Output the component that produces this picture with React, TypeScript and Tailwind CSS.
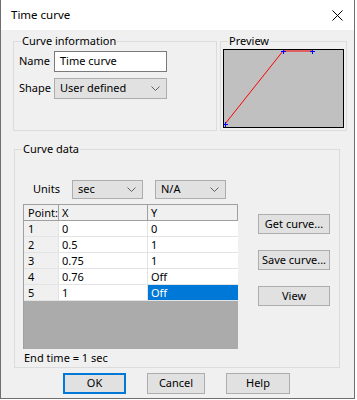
import React from 'react';

const font = { fontFamily: '"Noto Sans", "Open Sans", sans-serif' };

function Chevron() {
  return (
    <svg width="9" height="5" viewBox="0 0 9 5" className="shrink-0">
      <polyline points="0.5,0.5 4.5,4.5 8.5,0.5" fill="none" stroke="#606060" strokeWidth="1" />
    </svg>
  );
}

function Group({ label, className, children }: { label: string; className: string; children?: React.ReactNode }) {
  return (
    <div className={`relative border border-[#dcdcdc] ${className}`}>
      <span className="absolute -top-[9px] left-[7px] bg-[#f0f0f0] px-[1px] leading-[16px]">{label}</span>
      {children}
    </div>
  );
}

function Select({ value, className }: { value: string; className: string }) {
  return (
    <div className={`flex items-center justify-between bg-[#e1e1e1] border border-[#adadad] pl-[5px] pr-[6px] ${className}`}>
      <span>{value}</span>
      <Chevron />
    </div>
  );
}

function Button({ label, className }: { label: string; className: string }) {
  return (
    <div className={`flex items-center justify-center bg-[#e1e1e1] border border-[#adadad] ${className}`}>
      {label}
    </div>
  );
}

const rows = [
  ['1', '0', '0'],
  ['2', '0.5', '1'],
  ['3', '0.75', '1'],
  ['4', '0.76', 'Off'],
  ['5', '1', 'Off'],
];

export default function App() {
  return (
    <div className="w-[357px] h-[400px] bg-white text-[11px] text-black" style={font}>
      <div className="w-[355px] h-[399px] border-x border-b border-[#6f6f6f] flex flex-col">
        {/* Title bar */}
        <div className="h-[30px] bg-white flex items-center justify-between pl-[10px] pr-[11px] shrink-0">
          <span className="text-[11.5px]">Time curve</span>
          <svg width="11" height="11" viewBox="0 0 11 11">
            <line x1="0.5" y1="0.5" x2="10.5" y2="10.5" stroke="#000" strokeWidth="1" />
            <line x1="10.5" y1="0.5" x2="0.5" y2="10.5" stroke="#000" strokeWidth="1" />
          </svg>
        </div>

        {/* Body */}
        <div className="flex-1 bg-[#f0f0f0] flex flex-col">
          <div className="flex mt-[11px] ml-[12px]">
            <Group label="Curve information" className="w-[204px] h-[90px]">
              <div className="flex flex-col gap-[6px] pt-[9px] pl-[5px]">
                <div className="flex items-center h-[21px]">
                  <span className="w-[35px]">Name</span>
                  <div className="w-[113px] h-[21px] bg-white border border-[#7a7a7a] flex items-center pl-[5px]">Time curve</div>
                </div>
                <div className="flex items-center h-[21px]">
                  <span className="w-[35px]">Shape</span>
                  <Select value="User defined" className="w-[113px] h-[21px]" />
                </div>
              </div>
            </Group>
            <Group label="Preview" className="ml-[3px] w-[127px] h-[90px]">
              <div className="mt-[7px] ml-[2px] w-[121px] h-[79px] border border-black bg-[#c0c0c0]">
                <svg width="119" height="77" viewBox="0 0 119 77">
                  <polyline points="1,74 59,1 88,1" fill="none" stroke="#ff0000" strokeWidth="1" />
                  <g stroke="#0000ff" strokeWidth="1">
                    <line x1="-1" y1="74.5" x2="4" y2="74.5" />
                    <line x1="1.5" y1="72" x2="1.5" y2="77" />
                    <line x1="57" y1="1.5" x2="62" y2="1.5" />
                    <line x1="59.5" y1="-1" x2="59.5" y2="4" />
                    <line x1="86" y1="1.5" x2="91" y2="1.5" />
                    <line x1="88.5" y1="-1" x2="88.5" y2="4" />
                  </g>
                </svg>
              </div>
            </Group>
          </div>

          <Group label="Curve data" className="mt-[18px] ml-[13px] w-[326px] h-[219px]">
            <div className="flex items-center mt-[30px] ml-[18px] h-[19px]">
              <span className="w-[39px]">Units</span>
              <Select value="sec" className="w-[71px] h-[19px]" />
              <Select value="N/A" className="ml-[12px] w-[71px] h-[19px]" />
            </div>
            <div className="flex mt-[5px] ml-[8px]">
              <div className="w-[215px] h-[145px] border-l border-t border-[#a0a0a0] bg-[#ababab] flex flex-col">
                <div className="flex h-[16px] bg-[#f0f0f0] border-b border-[#a0a0a0] leading-[15px]">
                  <div className="w-[35px] border-r border-[#a0a0a0] pl-[4px]">Point:</div>
                  <div className="w-[89px] border-r border-[#a0a0a0] pl-[3px]">X</div>
                  <div className="w-[90px] border-r border-[#a0a0a0] pl-[3px]">Y</div>
                </div>
                {rows.map((r, i) => (
                  <div key={i} className="flex h-[16px] bg-white border-b border-[#e3e3e3] leading-[15px]">
                    <div className="w-[35px] bg-[#f0f0f0] border-r border-[#e3e3e3] pl-[4px]">{r[0]}</div>
                    <div className="w-[89px] border-r border-[#e3e3e3] pl-[3px]">{r[1]}</div>
                    <div className={`w-[90px] pl-[3px] ${i === 4 ? 'bg-[#0078d7] text-white' : ''}`}>{r[2]}</div>
                  </div>
                ))}
              </div>
              <div className="flex flex-col gap-[16px] ml-[20px] mt-[10px]">
                <Button label="Get curve..." className="w-[72px] h-[20px]" />
                <Button label="Save curve..." className="w-[72px] h-[20px]" />
                <Button label="View" className="w-[72px] h-[20px]" />
              </div>
            </div>
            <div className="ml-[9px] mt-[1px] leading-[16px]">End time = 1 sec</div>
          </Group>

          <div className="flex mt-[5px] ml-[62px]">
            <Button label="OK" className="w-[63px] h-[21px] border-2 !border-[#0078d7]" />
            <Button label="Cancel" className="ml-[21px] w-[58px] h-[21px]" />
            <Button label="Help" className="ml-[21px] w-[64px] h-[21px]" />
          </div>
        </div>
      </div>
    </div>
  );
}
